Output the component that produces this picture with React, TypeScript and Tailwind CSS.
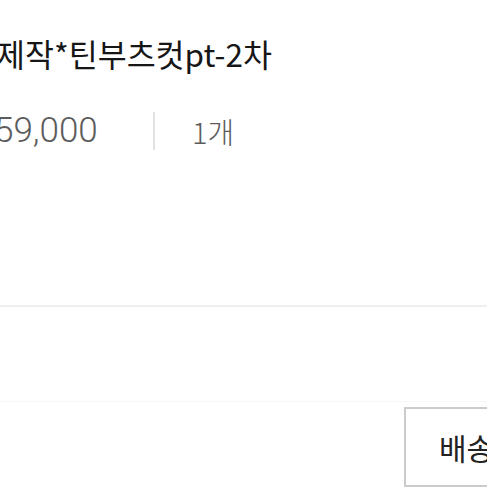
import React from "react"

const priceFont = { fontFamily: 'Roboto, "Noto Sans CJK KR", sans-serif' }
const krFont = { fontFamily: '"Noto Sans CJK KR", "Noto Sans", sans-serif' }

export default function App() {
    return (
        <div className="w-[487px] h-[487px] overflow-hidden bg-white">
            <div className="flex flex-col w-[520px] -ml-[6px]">
                <h1 className="mt-[29px] ml-[2px] text-[31.5px] leading-[48px] text-[#161616] font-normal whitespace-nowrap" style={krFont}>
                    제작*틴부츠컷pt-2차
                </h1>
                <div className="flex items-center mt-[34px] h-[40px]" style={priceFont}>
                    <span className="text-[35px] leading-[40px] text-[#5c5c5c] font-light w-[159px]">59,000</span>
                    <span className="w-[2px] h-[38px] bg-[#e2e2e2]" />
                    <span className="ml-[37px] text-[29px] leading-[40px] text-[#5c5c5c] font-light" style={krFont}>1개</span>
                </div>
                <div className="mt-[154px] h-[2px] bg-[#efefef]" />
                <div className="mt-[94px] h-[1px] bg-[#f7f7f7]" />
                <div className="flex justify-end mt-[5px]">
                    <button className="mr-[-130px] w-[240px] h-[80px] border-2 border-[#cbcbcb] bg-white text-left pl-[33px] text-[30px] text-[#222]" style={krFont}>
                        배송
                    </button>
                </div>
            </div>
        </div>
    )
}
